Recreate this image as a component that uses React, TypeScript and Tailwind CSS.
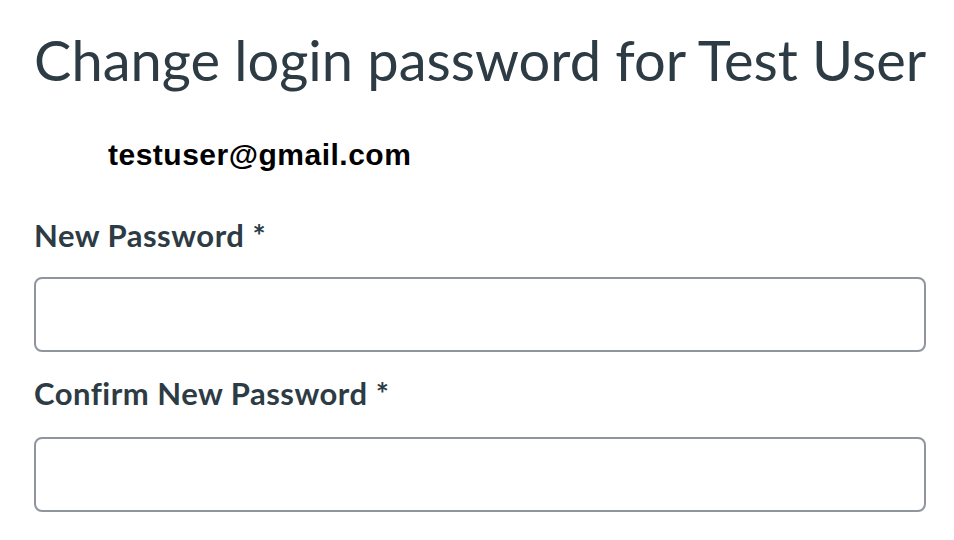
import React from "react";

const labelCls =
  "block text-[31px] leading-[1.2] tracking-[0.5px] font-bold text-[#2d3b45] font-['Lato','Noto_Sans',sans-serif]";

const inputCls =
  "block w-[892px] h-[75px] rounded-lg border-2 border-[#8f959d] bg-white outline-none px-4 text-[24px]";

export default function App() {
  return (
    <div className="min-h-screen bg-white">
      <div className="px-[34px] pt-[26px]">
        {/* Title */}
        <h1 className="text-[56px] leading-[1.2] font-normal text-[#2d3b45] font-['Lato','Noto_Sans',sans-serif] whitespace-nowrap">
          Change login password for Test User
        </h1>

        {/* Email */}
        <p className="mt-[44px] pl-[74px] text-[30px] leading-[36px] tracking-[0.5px] font-bold text-black font-['Liberation_Sans','Arial',sans-serif]">
          testuser@gmail.com
        </p>

        <form className="mt-[44px]">
          <label htmlFor="newPassword" className={labelCls}>
            New Password *
          </label>
          <input
            id="newPassword"
            type="password"
            className={`${inputCls} mt-[23px]`}
          />

          <label htmlFor="confirmPassword" className={`${labelCls} mt-[23px]`}>
            Confirm New Password *
          </label>
          <input
            id="confirmPassword"
            type="password"
            className={`${inputCls} mt-[24px]`}
          />
        </form>
      </div>
    </div>
  );
}
